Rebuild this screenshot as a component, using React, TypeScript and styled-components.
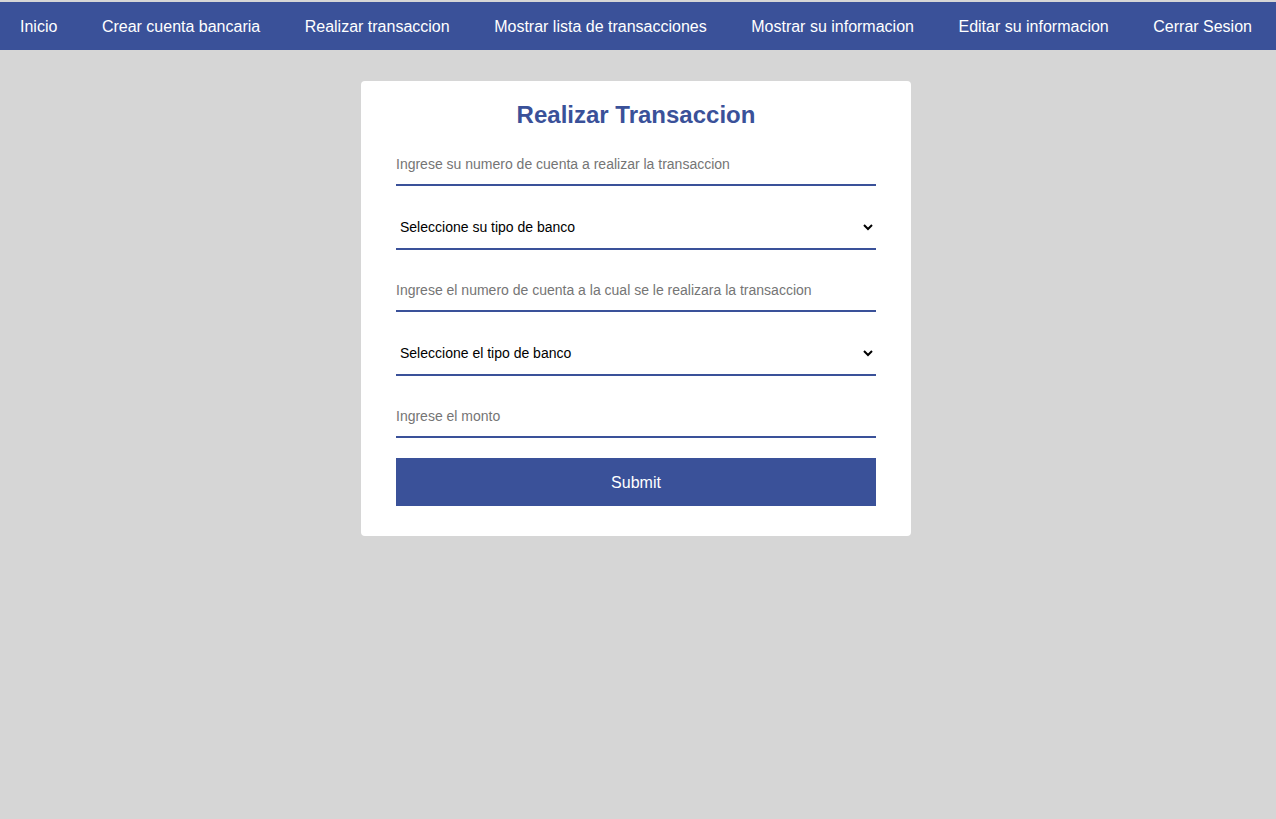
import React from "react";
import styled, { createGlobalStyle } from "styled-components";

const GlobalStyle = createGlobalStyle`
  html, body {
    margin: 0;
    padding: 0;
    background-color: #d6d6d6;
    font-family: "Liberation Sans", Arial, sans-serif;
  }
`;

const Page = styled.div`
  min-height: 819px;
  padding-top: 2px;
  box-sizing: border-box;
`;

const NavBar = styled.nav`
  height: 48px;
  box-sizing: border-box;
  padding: 1px 24px 0 20px;
  background-color: #3a5199;
  display: flex;
  justify-content: space-between;
  align-items: center;
`;

const NavLink = styled.a`
  color: white;
  font-size: 16px;
  text-decoration: none;
  cursor: pointer;
`;

const Main = styled.main`
  display: flex;
  justify-content: center;
  padding: 31px 4px 0 0;
`;

const Card = styled.form`
  width: 550px;
  box-sizing: border-box;
  background-color: white;
  border-radius: 4px;
  padding: 21px 35px 30px;
  display: flex;
  flex-direction: column;
`;

const Title = styled.h2`
  margin: 0 0 20px;
  text-align: center;
  color: #3a5199;
  font-size: 24px;
  line-height: 26px;
  font-weight: bold;
`;

const TextField = styled.input<{ $first?: boolean }>`
  height: 38px;
  margin-top: ${(p) => (p.$first ? "0" : "24px")};
  padding: 0 0 4px;
  border: none;
  border-bottom: 2px solid #3a5199;
  font-family: "Liberation Sans", Arial, sans-serif;
  font-size: 14px;
  color: #000;
  outline: none;
  box-sizing: border-box;

  &::placeholder {
    color: #757575;
  }
`;

const SelectBox = styled.div`
  height: 40px;
  margin-top: 24px;
  padding-bottom: 4px;
  border-bottom: 2px solid #3a5199;
  box-sizing: border-box;
  display: flex;
`;

const SelectField = styled.select`
  flex: 1;
  height: 34px;
  border: none;
  background-color: white;
  font-family: "Liberation Sans", Arial, sans-serif;
  font-size: 14px;
  color: #000;
  outline: none;
`;

const SubmitButton = styled.button`
  height: 48px;
  margin-top: 20px;
  padding-top: 2px;
  border: none;
  background-color: #3a5199;
  color: white;
  font-family: "Liberation Sans", Arial, sans-serif;
  font-size: 16px;
  cursor: pointer;
`;

const links = [
  "Inicio",
  "Crear cuenta bancaria",
  "Realizar transaccion",
  "Mostrar lista de transacciones",
  "Mostrar su informacion",
  "Editar su informacion",
  "Cerrar Sesion",
];

const App = () => {
  return (
    <Page>
      <GlobalStyle />
      <NavBar>
        {links.map((l) => (
          <NavLink key={l}>{l}</NavLink>
        ))}
      </NavBar>
      <Main>
        <Card onSubmit={(e) => e.preventDefault()}>
          <Title>Realizar Transaccion</Title>
          <TextField
            $first
            placeholder="Ingrese su numero de cuenta a realizar la transaccion"
          />
          <SelectBox>
            <SelectField defaultValue="">
              <option value="">Seleccione su tipo de banco</option>
            </SelectField>
          </SelectBox>
          <TextField placeholder="Ingrese el numero de cuenta a la cual se le realizara la transaccion" />
          <SelectBox>
            <SelectField defaultValue="">
              <option value="">Seleccione el tipo de banco</option>
            </SelectField>
          </SelectBox>
          <TextField placeholder="Ingrese el monto" />
          <SubmitButton type="submit">Submit</SubmitButton>
        </Card>
      </Main>
    </Page>
  );
};

export default App;
